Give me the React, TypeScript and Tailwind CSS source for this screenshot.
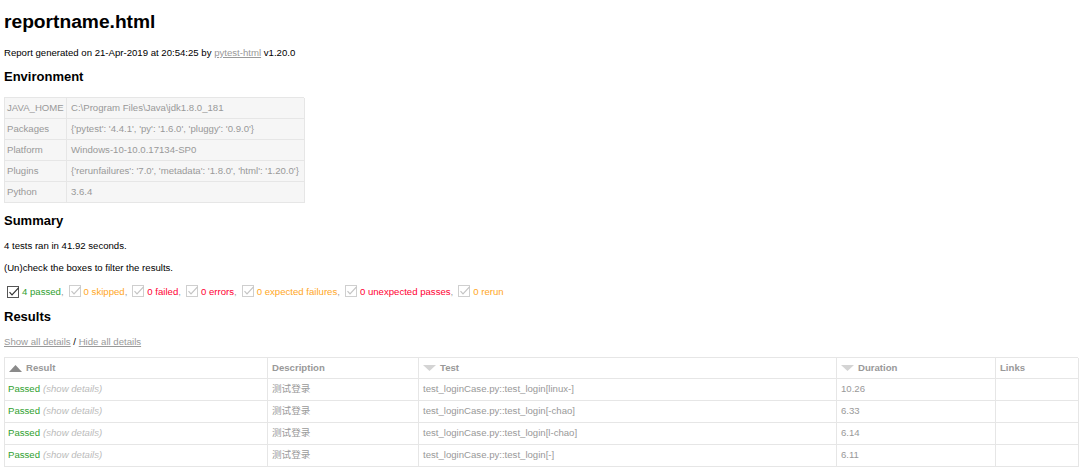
import React from "react";

const F = { fontFamily: '"Liberation Sans", Arial, "Noto Sans CJK SC", sans-serif' };

function Box({ dark }: { dark?: boolean }) {
  return (
    <svg width="13" height="13" viewBox="0 0 13 13" className="mr-[2px] shrink-0">
      <rect x="0.5" y="0.5" width="11" height="11" fill="#fff" stroke={dark ? "#555" : "#cfcfcf"} />
      <path d="M2.5 6.2 L5 8.8 L11.5 1.8" fill="none" stroke={dark ? "#333" : "#c4c4c4"} strokeWidth="1.2" />
    </svg>
  );
}

function Tri({ up }: { up?: boolean }) {
  return (
    <svg width="13" height="7" viewBox="0 0 13 7" className="mr-[4px] shrink-0">
      {up ? <path d="M0 7 L6.5 0 L13 7 Z" fill="#8a8a8a" /> : <path d="M0 0 L13 0 L6.5 6 Z" fill="#d4d4d4" />}
    </svg>
  );
}

const env: [string, string][] = [
  ["JAVA_HOME", "C:\\Program Files\\Java\\jdk1.8.0_181"],
  ["Packages", "{'pytest': '4.4.1', 'py': '1.6.0', 'pluggy': '0.9.0'}"],
  ["Platform", "Windows-10-10.0.17134-SP0"],
  ["Plugins", "{'rerunfailures': '7.0', 'metadata': '1.8.0', 'html': '1.20.0'}"],
  ["Python", "3.6.4"],
];

const rows: [string, string][] = [
  ["test_loginCase.py::test_login[linux-]", "10.26"],
  ["test_loginCase.py::test_login[-chao]", "6.33"],
  ["test_loginCase.py::test_login[l-chao]", "6.14"],
  ["test_loginCase.py::test_login[-]", "6.11"],
];

const cols = "grid grid-cols-[263px_151px_418px_159px_83px]";

export default function App() {
  return (
    <div style={F} className="w-[1080px] h-[469px] overflow-hidden bg-white pl-[4px] text-[9.6px] text-black">
      <h1 className="h-[44px] leading-[44px] text-[19.2px] font-bold">reportname.html</h1>
      <p className="h-[18px] leading-[18px]">
        Report generated on 21-Apr-2019 at 20:54:25 by <span className="text-[#999] underline">pytest-html</span> v1.20.0
      </p>
      <h2 className="h-[30px] leading-[30px] text-[13px] font-bold">Environment</h2>
      <div className="mt-[5px] w-[300px] border-t border-l border-[#e6e6e6] bg-[#f6f6f6] text-[#999]">
        {env.map(([k, v]) => (
          <div key={k} className="grid grid-cols-[62px_238px] h-[21px]">
            <div className="border-r border-b border-[#e6e6e6] pl-[2px] leading-[20px] whitespace-nowrap">{k}</div>
            <div className="border-r border-b border-[#e6e6e6] px-[4px] leading-[20px] whitespace-nowrap">{v}</div>
          </div>
        ))}
      </div>
      <h2 className="h-[36px] leading-[36px] text-[13px] font-bold">Summary</h2>
      <p className="h-[14px] leading-[14px]">4 tests ran in 41.92 seconds.</p>
      <p className="h-[30px] leading-[30px]">(Un)check the boxes to filter the results.</p>
      <div className="h-[18px] flex items-center pl-[3px] whitespace-nowrap">
        <Box dark /><span className="text-[#2f9f2f]">4 passed</span><span className="text-[#999]">,</span>
        <span className="ml-[5px] flex items-center"><Box /><span className="text-[#ffa726]">0 skipped</span><span className="text-[#999]">,</span></span>
        <span className="ml-[5px] flex items-center"><Box /><span className="text-[#f03]">0 failed</span><span className="text-[#999]">,</span></span>
        <span className="ml-[5px] flex items-center"><Box /><span className="text-[#f03]">0 errors</span><span className="text-[#999]">,</span></span>
        <span className="ml-[5px] flex items-center"><Box /><span className="text-[#ffa726]">0 expected failures</span><span className="text-[#999]">,</span></span>
        <span className="ml-[5px] flex items-center"><Box /><span className="text-[#f03]">0 unexpected passes</span><span className="text-[#999]">,</span></span>
        <span className="ml-[5px] flex items-center"><Box /><span className="text-[#ffa726]">0 rerun</span></span>
      </div>
      <h2 className="h-[32px] leading-[32px] text-[13px] font-bold">Results</h2>
      <p className="h-[18px] leading-[18px] text-[#999]">
        <span className="underline">Show all details</span> <span className="text-black">/</span> <span className="underline">Hide all details</span>
      </p>
      <div className="mt-[6px] w-[1074px] border-t border-l border-[#e6e6e6] text-[#999]">
        <div className={`${cols} h-[21px] font-bold`}>
          <div className="border-r border-b border-[#e6e6e6] px-[4px] flex items-center"><Tri up />Result</div>
          <div className="border-r border-b border-[#e6e6e6] px-[4px] flex items-center">Description</div>
          <div className="border-r border-b border-[#e6e6e6] px-[4px] flex items-center"><Tri />Test</div>
          <div className="border-r border-b border-[#e6e6e6] px-[4px] flex items-center"><Tri />Duration</div>
          <div className="border-r border-b border-[#e6e6e6] px-[4px] flex items-center">Links</div>
        </div>
        {rows.map(([t, d]) => (
          <div key={t} className={`${cols} h-[22px]`}>
            <div className="border-r border-b border-[#e6e6e6] px-[3px] flex items-center whitespace-nowrap">
              <span className="text-[#2f9f2f]">Passed</span>
              <span className="ml-[3px] italic text-[#bbb]">(show details)</span>
            </div>
            <div className="border-r border-b border-[#e6e6e6] px-[4px] flex items-center">测试登录</div>
            <div className="border-r border-b border-[#e6e6e6] px-[4px] flex items-center whitespace-nowrap">{t}</div>
            <div className="border-r border-b border-[#e6e6e6] px-[4px] flex items-center">{d}</div>
            <div className="border-r border-b border-[#e6e6e6] px-[4px]"></div>
          </div>
        ))}
      </div>
    </div>
  );
}
